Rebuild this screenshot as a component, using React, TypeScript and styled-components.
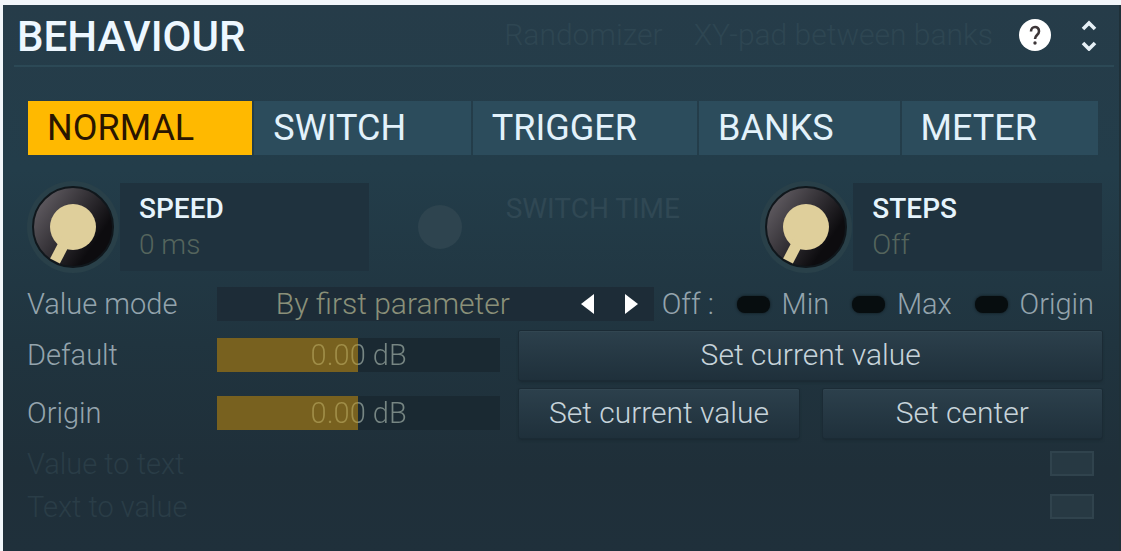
import React, { useState } from "react";
import styled, { createGlobalStyle } from "styled-components";

const Global = createGlobalStyle`
  *, *::before, *::after { box-sizing: border-box; }
  body {
    margin: 0;
    background: #f1f6fa;
    font-family: Roboto, "Liberation Sans", sans-serif;
    font-size: 29px;
    font-weight: 300;
    line-height: 34px;
  }
  button, input, select { font: inherit; color: inherit; margin: 0; }
  button { border: 0; padding: 0; background: none; cursor: pointer; }
  button:disabled { cursor: default; }
`;

const Page = styled.div`
  min-height: 100vh;
  padding: 5px 0 0 3px;
  display: flex;
`;

const Panel = styled.section`
  flex: 1;
  min-width: 0;
  color: #94a4ad;
  background: linear-gradient(180deg, #263c49 0%, #233d4a 30%, #20343f 62%, #1f2f39 85%, #1f303b 100%);
  border-right: 2px solid #1f3038;
`;

const Header = styled.header`
  height: 62px;
  margin: 0 5px 0 11px;
  padding: 0 17px 0 3px;
  display: flex;
  align-items: center;
  border-bottom: 2px solid #2c4956;
`;

const Title = styled.h2`
  flex: 1;
  margin: 0;
  padding-top: 4px;
  color: #edf7ff;
  font-size: 42px;
  line-height: 50px;
  font-weight: 500;
`;

const HeaderExtras = styled.div`
  display: flex;
  gap: 31px;
  margin-right: 26px;
`;

const HeaderLink = styled.button`
  color: #2e4652;
  font-size: 30px;
`;

const IconButton = styled.button<{ $gap?: number }>`
  display: flex;
  margin-left: ${(p) => p.$gap ?? 0}px;
`;

const Tabs = styled.div`
  margin: 34px 21px 0 25px;
  display: grid;
  grid-template-columns: 225fr 217fr 225fr 201fr 197fr;
  gap: 2px;
`;

const Tab = styled.button<{ $active: boolean }>`
  height: 54px;
  padding-left: 19px;
  text-align: left;
  font-size: 36px;
  font-weight: 400;
  color: ${(p) => (p.$active ? "#2a1500" : "#e3f2fb")};
  background: ${(p) => (p.$active ? "#ffb900" : "#2c4c5c")};
`;

const Knobs = styled.div`
  margin: 25px 17px 0 23px;
  display: grid;
  grid-template-columns: repeat(3, 1fr);
  gap: 24px;
`;

const KnobCell = styled.label`
  display: flex;
  height: 94px;
  align-items: center;
`;

const KnobFace = styled.span`
  display: grid;
  width: 94px;
  height: 94px;
  flex: none;
  > * { grid-area: 1 / 1; width: 94px; height: 94px; }
  input { opacity: 0; }
`;

const KnobText = styled.span<{ $off?: boolean }>`
  flex: 1;
  height: 88px;
  padding: 8px 0 0 19px;
  display: flex;
  flex-direction: column;
  font-size: 28px;
  line-height: 36px;
  background: ${(p) => (p.$off ? "none" : "#1f323e")};
`;

const KnobName = styled.span<{ $off?: boolean }>`
  font-weight: ${(p) => (p.$off ? 400 : 500)};
  color: ${(p) => (p.$off ? "#304854" : "#e6f4fc")};
`;

const KnobValue = styled.output`
  color: #55655d;
`;

const Rows = styled.div`
  margin: 8px 17px 0 24px;
`;

const Row = styled.div<{ $h: number }>`
  height: ${(p) => p.$h}px;
  display: flex;
  align-items: center;
`;

const Label = styled.label`
  width: 190px;
  flex: none;
`;

const ModeField = styled.div`
  flex: 436 1 0;
  height: 34px;
  padding-right: 16px;
  display: flex;
  align-items: center;
  background: #1d2c37;
`;

const ModeSelect = styled.select`
  flex: 1;
  min-width: 0;
  height: 34px;
  padding: 0;
  border: 0;
  appearance: none;
  background: none;
  color: #8a9079;
  font-size: 30px;
  text-align: center;
  text-align-last: center;
  option { color: #d8dccb; background: #1d2c37; }
`;

const OffGroup = styled.div`
  flex: 448 1 0;
  display: flex;
  align-items: center;
  justify-content: space-between;
  padding: 0 8px;
`;

const Check = styled.label`
  display: flex;
  align-items: center;
  gap: 12px;
`;

const Pill = styled.input`
  appearance: none;
  width: 33px;
  height: 17px;
  border-radius: 8px;
  background: #070d0f;
  box-shadow: 0 0 3px #0d171b;
  &:checked { background: #ffb900; }
`;

const Slider = styled.div`
  flex: 283 1 0;
  height: 34px;
  margin-right: 19px;
  display: grid;
  > * { grid-area: 1 / 1; }
`;

const SliderInput = styled.input`
  appearance: none;
  width: 100%;
  height: 34px;
  background: linear-gradient(90deg, #78611f 50%, #1a2932 50%);
  &::-webkit-slider-thumb { appearance: none; width: 1px; height: 34px; }
`;

const SliderValue = styled.output`
  text-align: center;
  pointer-events: none;
  color: transparent;
  background: linear-gradient(90deg, #a08e48 50%, #778683 50%);
  background-clip: text;
  -webkit-background-clip: text;
`;

const Actions = styled.div`
  flex: 582 1 0;
  display: flex;
  gap: 24px;
`;

const Action = styled.button`
  flex: 1;
  height: 49px;
  color: #c6d3da;
  font-size: 30px;
  border-radius: 2px;
  background: linear-gradient(180deg, #2c404c, #1f303b);
  box-shadow: 0 0 0 1px #1b2b35, 0 2px 3px #192830, inset 0 1px 0 #324651;
`;

const FaintLabel = styled(Label)`
  flex: 1;
  color: #2a3d47;
`;

const FaintBox = styled.button`
  width: 44px;
  height: 25px;
  margin-right: 8px;
  background: #273943;
  border: 2px solid #30434d;
`;

function Knob({ id, name, value, off }: { id: string; name: string; value?: string; off?: boolean }) {
  return (
    <KnobCell>
      <KnobFace>
        <svg viewBox="0 0 94 94" aria-hidden="true">
          <defs>
            <linearGradient id={id} x1="0" y1="0.1" x2="1" y2="0.8">
              <stop offset="0" stopColor="#69646a" />
              <stop offset="0.45" stopColor="#353237" />
              <stop offset="0.8" stopColor="#0d0c0f" />
            </linearGradient>
          </defs>
          {off ? (
            <circle cx="47" cy="47" r="22" fill="#2e444f" />
          ) : (
            <>
              <circle cx="47" cy="47" r="46" fill="#294049" />
              <circle cx="47" cy="47" r="40" fill={`url(#${id})`} stroke="#10171c" strokeWidth="2" />
              <circle cx="47" cy="47" r="23" fill="#dfcf9b" />
              <path d="M41 58 L29 81" stroke="#dfcf9b" strokeWidth="11" />
            </>
          )}
        </svg>
        <input type="range" min="0" max="100" defaultValue="0" disabled={off} aria-label={name} />
      </KnobFace>
      <KnobText $off={off}>
        <KnobName $off={off}>{name}</KnobName>
        {value && <KnobValue>{value}</KnobValue>}
      </KnobText>
    </KnobCell>
  );
}

function LevelSlider({ id }: { id: string }) {
  return (
    <Slider>
      <SliderInput id={id} type="range" min="-24" max="24" defaultValue="0" />
      <SliderValue htmlFor={id}>0.00 dB</SliderValue>
    </Slider>
  );
}

const TABS = ["NORMAL", "SWITCH", "TRIGGER", "BANKS", "METER"];

export default function App() {
  const [tab, setTab] = useState("NORMAL");
  return (
    <Page>
      <Global />
      <Panel>
        <Header>
          <Title>BEHAVIOUR</Title>
          <HeaderExtras>
            <HeaderLink disabled>Randomizer</HeaderLink>
            <HeaderLink disabled>XY-pad between banks</HeaderLink>
          </HeaderExtras>
          <IconButton aria-label="Help">
            <svg width="32" height="32" viewBox="0 0 32 32">
              <circle cx="16" cy="16" r="16" fill="#fff" />
              <path d="M12 12.5 C12 6.5 20 6.5 20 12.2 C20 16 16 16 16 20" fill="none" stroke="#3d3638" strokeWidth="2.6" />
              <circle cx="16" cy="24" r="1.7" fill="#3d3638" />
            </svg>
          </IconButton>
          <IconButton $gap={30} aria-label="Expand or collapse">
            <svg width="16" height="32" viewBox="0 0 16 32" fill="none" stroke="#e6f0f6" strokeWidth="3.6">
              <path d="M2 10 L8 4 L14 10" />
              <path d="M2 24 L8 30 L14 24" />
            </svg>
          </IconButton>
        </Header>

        <Tabs role="tablist">
          {TABS.map((t) => (
            <Tab key={t} role="tab" aria-selected={t === tab} $active={t === tab} onClick={() => setTab(t)}>
              {t}
            </Tab>
          ))}
        </Tabs>

        <Knobs>
          <Knob id="speed" name="SPEED" value="0 ms" />
          <Knob id="switchTime" name="SWITCH TIME" off />
          <Knob id="steps" name="STEPS" value="Off" />
        </Knobs>

        <Rows>
          <Row $h={44}>
            <Label htmlFor="mode">Value mode</Label>
            <ModeField>
              <ModeSelect id="mode">
                <option>By first parameter</option>
              </ModeSelect>
              <IconButton $gap={12} aria-label="Previous mode">
                <svg width="14" height="20" viewBox="0 0 14 20"><path d="M13 0 V20 L0 10 Z" fill="#fff" /></svg>
              </IconButton>
              <IconButton $gap={29} aria-label="Next mode">
                <svg width="14" height="20" viewBox="0 0 14 20"><path d="M1 0 V20 L14 10 Z" fill="#fff" /></svg>
              </IconButton>
            </ModeField>
            <OffGroup>
              <span>Off :</span>
              <Check><Pill type="checkbox" />Min</Check>
              <Check><Pill type="checkbox" />Max</Check>
              <Check><Pill type="checkbox" />Origin</Check>
            </OffGroup>
          </Row>
          <Row $h={58}>
            <Label htmlFor="default">Default</Label>
            <LevelSlider id="default" />
            <Actions>
              <Action>Set current value</Action>
            </Actions>
          </Row>
          <Row $h={58}>
            <Label htmlFor="origin">Origin</Label>
            <LevelSlider id="origin" />
            <Actions>
              <Action>Set current value</Action>
              <Action>Set center</Action>
            </Actions>
          </Row>
          <Row $h={43}>
            <FaintLabel htmlFor="toText">Value to text</FaintLabel>
            <FaintBox id="toText" disabled />
          </Row>
          <Row $h={43}>
            <FaintLabel htmlFor="toValue">Text to value</FaintLabel>
            <FaintBox id="toValue" disabled />
          </Row>
        </Rows>
      </Panel>
    </Page>
  );
}
